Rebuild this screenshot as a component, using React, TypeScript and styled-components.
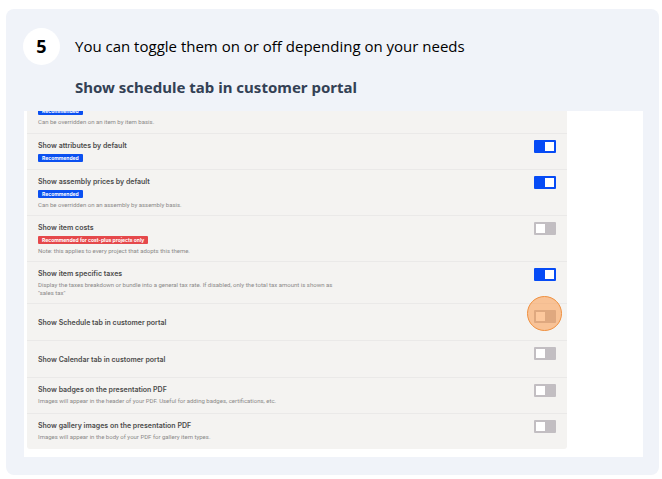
import React, { useState } from "react";
import styled, { createGlobalStyle } from "styled-components";

const GlobalStyle = createGlobalStyle`
  *, *::before, *::after { box-sizing: border-box; }
  body {
    margin: 0;
    background: #ffffff;
    color: #000000;
    font-family: "Open Sans", "Noto Sans", sans-serif;
  }
`;

const StepCard = styled.section`
  margin: 9px 3px 4px 6px;
  padding: 19px 16px 18px 18px;
  border-radius: 8px;
  background: #f0f3f9;
`;

const StepHeader = styled.header`
  display: grid;
  grid-template-columns: 37px 1fr;
  column-gap: 15px;
  align-items: center;
  margin-left: -1px;
`;

const StepNumber = styled.span`
  display: flex;
  align-items: center;
  justify-content: center;
  height: 37px;
  padding-bottom: 2px;
  border-radius: 50%;
  background: #ffffff;
  font-family: "Noto Sans", sans-serif;
  font-size: 18px;
  font-weight: 700;
  line-height: 24px;
`;

const StepText = styled.p`
  margin: 0;
  padding-bottom: 2px;
  font-size: 15px;
  line-height: 24px;
`;

const StepTitle = styled.h2`
  grid-column: 2;
  margin: 10px 0 12px;
  color: #334155;
  font-family: "Noto Sans", sans-serif;
  font-size: 15px;
  font-weight: 700;
  line-height: 24px;
`;

const Frame = styled.div`
  overflow: hidden;
  padding: 0 76px 8px 3px;
  background: #ffffff;
`;

const SettingsList = styled.ul`
  margin: -14px 0 0;
  padding: 0;
  border-radius: 0 0 3px 3px;
  background: #f4f3f1;
  list-style: none;
  font-family: Inter, sans-serif;
`;

const Row = styled.li<{ $single: boolean }>`
  display: flex;
  justify-content: space-between;
  min-height: ${({ $single }) => ($single ? "37px" : "36px")};
  padding: 6px 11px;
  border-top: 1px solid #eae9e8;
`;

const RowText = styled.div<{ $single: boolean }>`
  display: flex;
  flex-direction: column;
  align-items: flex-start;
  justify-content: ${({ $single }) => ($single ? "center" : "flex-start")};
  max-width: 304px;
`;

const RowTitle = styled.label`
  color: #4c4c4c;
  font-size: 7px;
  font-weight: 600;
  line-height: 11px;
`;

const Badge = styled.span<{ $tone: "blue" | "red" }>`
  margin-top: 3px;
  padding: 0 4px;
  border-radius: 1px;
  background: ${({ $tone }) => ($tone === "blue" ? "#0b50f0" : "#e5484b")};
  color: #ffffff;
  font-size: 5px;
  font-weight: 700;
  line-height: 8px;
`;

const Description = styled.p<{ $afterBadge: boolean }>`
  margin: ${({ $afterBadge }) => ($afterBadge ? "3px" : "2px")} 0 0;
  color: #8b8a89;
  font-family: Roboto, sans-serif;
  font-size: 6px;
  line-height: 8px;
`;

const ToggleSlot = styled.div`
  position: relative;
  width: 22px;
  height: 13px;
`;

const Toggle = styled.input`
  display: block;
  appearance: none;
  width: 22px;
  height: 13px;
  margin: 0;
  padding: 2px;
  border-radius: 1px;
  background: #c2bec2;
  cursor: pointer;

  &::before {
    content: "";
    display: block;
    width: 9px;
    height: 9px;
    background: #ffffff;
  }

  &:checked { background: #064bf5; }
  &:checked::before { margin-left: auto; }
`;

const ClickMarker = styled.span`
  position: absolute;
  top: -14px;
  left: -7px;
  width: 35px;
  height: 35px;
  border: 1px solid #f0903f;
  border-radius: 50%;
  background: rgba(251, 146, 60, 0.5);
  pointer-events: none;
`;

type Setting = {
  id: string;
  title?: string;
  badge?: string;
  tone?: "blue" | "red";
  description?: string;
  on: boolean;
  marked?: boolean;
};

const settings: Setting[] = [
  { id: "item", badge: "Recommended", description: "Can be overridden on an item by item basis.", on: true },
  { id: "attributes", title: "Show attributes by default", badge: "Recommended", on: true },
  { id: "assembly", title: "Show assembly prices by default", badge: "Recommended", description: "Can be overridden on an assembly by assembly basis.", on: true },
  { id: "costs", title: "Show item costs", badge: "Recommended for cost-plus projects only", tone: "red", description: "Note: this applies to every project that adopts this theme.", on: false },
  { id: "taxes", title: "Show item specific taxes", description: "Display the taxes breakdown or bundle into a general tax rate. If disabled, only the total tax amount is shown as \"sales tax\"", on: true },
  { id: "schedule", title: "Show Schedule tab in customer portal", on: false, marked: true },
  { id: "calendar", title: "Show Calendar tab in customer portal", on: false },
  { id: "badges", title: "Show badges on the presentation PDF", description: "Images will appear in the header of your PDF. Useful for adding badges, certifications, etc.", on: false },
  { id: "gallery", title: "Show gallery images on the presentation PDF", description: "Images will appear in the body of your PDF for gallery item types.", on: false },
];

function SettingRow({ setting }: { setting: Setting }) {
  const [on, setOn] = useState(setting.on);
  const single = !setting.badge && !setting.description;
  return (
    <Row $single={single}>
      <RowText $single={single}>
        {setting.title && <RowTitle htmlFor={setting.id}>{setting.title}</RowTitle>}
        {setting.badge && <Badge $tone={setting.tone ?? "blue"}>{setting.badge}</Badge>}
        {setting.description && (
          <Description $afterBadge={Boolean(setting.badge)}>{setting.description}</Description>
        )}
      </RowText>
      {setting.title && (
        <ToggleSlot>
          <Toggle id={setting.id} type="checkbox" role="switch" checked={on} onChange={(e) => setOn(e.target.checked)} />
          {setting.marked && <ClickMarker />}
        </ToggleSlot>
      )}
    </Row>
  );
}

export default function App() {
  return (
    <>
      <GlobalStyle />
      <StepCard>
        <StepHeader>
          <StepNumber>5</StepNumber>
          <StepText>You can toggle them on or off depending on your needs</StepText>
          <StepTitle>Show schedule tab in customer portal</StepTitle>
        </StepHeader>
        <Frame>
          <SettingsList>
            {settings.map((s) => (
              <SettingRow key={s.id} setting={s} />
            ))}
          </SettingsList>
        </Frame>
      </StepCard>
    </>
  );
}
